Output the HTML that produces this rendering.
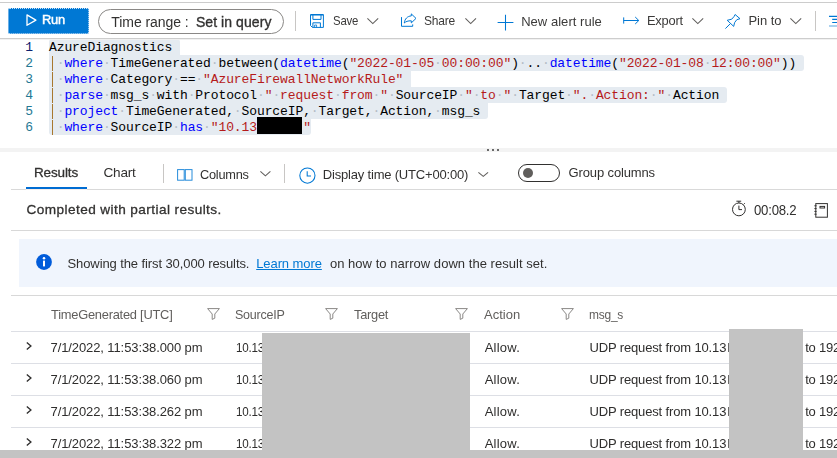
<!DOCTYPE html>
<html><head><meta charset="utf-8"><title>Logs</title>
<style>
html,body{margin:0;padding:0;}
body{width:837px;height:458px;position:relative;overflow:hidden;background:#fff;font-family:"Liberation Sans",sans-serif;}
.t{position:absolute;white-space:pre;line-height:20px;height:20px;transform-origin:0 50%;}
.a{position:absolute;}
.ln{position:absolute;left:0;width:33px;text-align:right;font-family:"Liberation Mono",monospace;font-size:13px;letter-spacing:-0.1px;line-height:18px;height:16px;color:#237893;}
.cl{position:absolute;left:49px;height:16px;line-height:18px;font-family:"Liberation Mono",monospace;font-size:13px;letter-spacing:-0.1px;white-space:pre;color:#000;background:#e5ebf1;}
.k{color:#0000ff;}.s{color:#b51a1a;}.d{color:#b4bcc6;}
.p{display:inline-block;width:7.7px;height:16px;vertical-align:top;position:relative;}
.p:before{content:"";position:absolute;left:3px;top:1px;width:1px;height:15px;background:#a8782e;}
svg{position:absolute;overflow:visible;}
</style></head><body>
<!-- top line -->
<div class="a" style="left:0;top:2px;width:837px;height:1px;background:#cccccc;"></div>
<!-- toolbar bottom border -->

<!-- Run button -->
<div class="a" style="left:7.5px;top:7.8px;width:81px;height:25.8px;background:#0078d4;border-radius:2px;box-sizing:border-box;border:1px dotted #cfe4f7;"></div>
<svg style="left:26px;top:14px" width="11" height="13" viewBox="0 0 11 13"><path d="M1 0.9 L9.9 6.1 L1 11.3 Z" fill="none" stroke="#fff" stroke-width="1.3" stroke-linejoin="round"/></svg>
<!-- time range pill -->
<div class="a" style="left:98px;top:9px;width:186px;height:25px;box-sizing:border-box;border:1px solid #8a8886;border-radius:12.5px;"></div>
<!-- separators -->
<div class="a" style="left:295px;top:11px;width:1px;height:20px;background:#c8c6c4;"></div>
<div class="a" style="left:815px;top:11px;width:1px;height:20px;background:#c8c6c4;"></div>
<!-- save icon -->
<svg style="left:310px;top:14px" width="14" height="14" viewBox="0 0 14 14" fill="none" stroke="#0078d4" stroke-width="1"><path d="M0.5 0.5 H13.4 V13.4 H2.4 L0.5 11.5 Z"/><path d="M0.5 1.4 H13.4" stroke-opacity="0.6"/><path d="M2.9 1 V5.4 H11 V1"/><path d="M2.9 13.4 V8.8 H10.4 V13.4"/><path d="M4.6 13.4 V11 H6.6 V13.4" stroke-opacity="0.8"/></svg>
<!-- chevrons -->
<svg style="left:367.4px;top:18.0px" width="11.6" height="6.2" viewBox="0 0 11.6 6.2" fill="none" stroke="#605e5c" stroke-width="1.05"><path d="M0.4 0.4 L5.80 5.60 L11.20 0.4"/></svg>
<svg style="left:465.0px;top:18.0px" width="11.4" height="6.2" viewBox="0 0 11.4 6.2" fill="none" stroke="#605e5c" stroke-width="1.05"><path d="M0.4 0.4 L5.70 5.60 L11.00 0.4"/></svg>
<svg style="left:691.8px;top:18.0px" width="11.6" height="6.2" viewBox="0 0 11.6 6.2" fill="none" stroke="#605e5c" stroke-width="1.05"><path d="M0.4 0.4 L5.80 5.60 L11.20 0.4"/></svg>
<svg style="left:790.3px;top:18.0px" width="11.6" height="6.2" viewBox="0 0 11.6 6.2" fill="none" stroke="#605e5c" stroke-width="1.05"><path d="M0.4 0.4 L5.80 5.60 L11.20 0.4"/></svg>
<svg style="left:259.6px;top:171.3px" width="10.8" height="5.5" viewBox="0 0 10.8 5.5" fill="none" stroke="#605e5c" stroke-width="1.05"><path d="M0.4 0.4 L5.40 4.90 L10.40 0.4"/></svg>
<svg style="left:477.6px;top:172.0px" width="10.5" height="5.0" viewBox="0 0 10.5 5.0" fill="none" stroke="#605e5c" stroke-width="1.05"><path d="M0.4 0.4 L5.25 4.40 L10.10 0.4"/></svg>
<!-- share icon -->
<svg style="left:400px;top:13px" width="17" height="15" viewBox="0 0 17 15" fill="none" stroke="#0078d4" stroke-width="1" stroke-linejoin="miter"><path d="M1.5 4.1 V13.3 H12.7 V11.4"/><path d="M11.3 0.9 L16 5.4 L11.3 9.9 V7.8 C8 7.7 5.6 8.6 4.3 10 C4.7 6 7.4 3.1 11.3 2.9 Z"/></svg>
<!-- plus icon -->
<svg style="left:497px;top:14px" width="17" height="17" viewBox="0 0 17 17" fill="none" stroke="#0078d4" stroke-width="1.05"><path d="M8.5 0.8 V16.6 M0.6 8.5 H16.4"/></svg>
<!-- export icon -->
<svg style="left:623px;top:15px" width="17" height="11" viewBox="0 0 17 11" fill="none" stroke="#0078d4" stroke-width="1"><path d="M0.7 2.4 V8.6 M0.7 5.5 H15.6 M12.2 2 L15.8 5.5 L12.2 9"/></svg>
<!-- pin icon -->
<svg style="left:725px;top:14px" width="16" height="16" viewBox="0 0 16 16" fill="none" stroke="#0078d4" stroke-width="1" stroke-linejoin="round"><path d="M10.1 0.5 L15 4.7 L11.8 5.7 L9.6 8.6 L8.7 12.4 L2.2 6.3 L6.7 5.2 L9 2.6 Z"/><path d="M5.3 9.7 L0.4 14.6"/></svg>
<!-- right edge icon -->
<svg style="left:829px;top:14px" width="8" height="14" viewBox="0 0 8 14" fill="none" stroke="#0078d4" stroke-width="1.2"><path d="M0 2.3 H8 M3.2 5.4 H8 M3.2 8.5 H8"/><path d="M0 12 H8" stroke-opacity="0.55"/></svg>

<!-- editor -->
<div class="ln" style="top:39px;color:#0b216f;">1</div>
<div class="ln" style="top:55px;">2</div>
<div class="ln" style="top:71px;">3</div>
<div class="ln" style="top:87px;">4</div>
<div class="ln" style="top:103px;">5</div>
<div class="ln" style="top:119px;">6</div>
<div class="cl" style="top:39px;border-radius:3px 3px 0 0;">AzureDiagnostics </div>
<div class="cl" style="top:55px;border-radius:0 3px 3px 0;"><span class="p"></span><span class="d">·</span><span class="k">where</span><span class="d">·</span>TimeGenerated<span class="d">·</span>between(<span class="k">datetime</span>(<span class="s">"2022-01-05<span class="d">·</span>00:00:00"</span>)<span class="d">·</span>..<span class="d">·</span><span class="k">datetime</span>(<span class="s">"2022-01-08<span class="d">·</span>12:00:00"</span>)) </div>
<div class="cl" style="top:71px;border-radius:0;"><span class="p"></span><span class="d">·</span><span class="k">where</span><span class="d">·</span>Category<span class="d">·</span>==<span class="d">·</span><span class="s">"AzureFirewallNetworkRule"</span> </div>
<div class="cl" style="top:87px;border-radius:0 3px 3px 0;"><span class="p"></span><span class="d">·</span><span class="k">parse</span><span class="d">·</span>msg_s<span class="d">·</span>with<span class="d">·</span>Protocol<span class="d">·</span><span class="s">"<span class="d">·</span>request<span class="d">·</span>from<span class="d">·</span>"</span><span class="d">·</span>SourceIP<span class="d">·</span><span class="s">"<span class="d">·</span>to<span class="d">·</span>"</span><span class="d">·</span>Target<span class="d">·</span><span class="s">".<span class="d">·</span>Action:<span class="d">·</span>"</span><span class="d">·</span>Action </div>
<div class="cl" style="top:103px;border-radius:0 0 3px 0;"><span class="p"></span><span class="d">·</span><span class="k">project</span><span class="d">·</span>TimeGenerated,<span class="d">·</span>SourceIP,<span class="d">·</span>Target,<span class="d">·</span>Action,<span class="d">·</span>msg_s </div>
<div class="cl" style="top:119px;border-radius:0 0 3px 3px;"><span class="p"></span><span class="d">·</span><span class="k">where</span><span class="d">·</span>SourceIP<span class="d">·</span><span class="k">has</span><span class="d">·</span><span class="s">"10.13      "</span></div>
<div class="a" style="left:0;top:38px;width:837px;height:1px;background:#cdcdcd;"></div><div class="a" style="left:0;top:39px;width:837px;height:1px;background:#f1f1f1;"></div>
<!-- redaction -->
<div class="a" style="left:257px;top:117px;width:45px;height:17px;background:#000;"></div>

<!-- splitter -->
<div class="a" style="left:0;top:148px;width:837px;height:4px;background:#f3f3f3;"></div>
<div class="a" style="left:487px;top:149px;width:2px;height:2px;background:#6a6a6a;"></div>
<div class="a" style="left:492px;top:149px;width:2px;height:2px;background:#6a6a6a;"></div>
<div class="a" style="left:497px;top:149px;width:2px;height:2px;background:#6a6a6a;"></div>

<!-- tabs -->
<div class="a" style="left:26px;top:187px;width:61px;height:2px;background:#006cd2;"></div>
<div class="a" style="left:11px;top:189px;width:826px;height:1px;background:#d9d9d9;"></div>
<div class="a" style="left:26px;top:189px;width:61px;height:1px;background:#f7efec;"></div>
<div class="a" style="left:163px;top:164px;width:1px;height:19px;background:#c8c6c4;"></div>
<div class="a" style="left:284px;top:164px;width:1px;height:19px;background:#c8c6c4;"></div>
<!-- columns icon -->
<svg style="left:177px;top:169.4px" width="16" height="12" viewBox="0 0 16 12" fill="none" stroke="#0078d4" stroke-opacity="0.85" stroke-width="1"><rect x="0.6" y="0.6" width="6.6" height="10.6"/><rect x="8.3" y="0.6" width="6.7" height="10.6"/></svg>
<!-- clock icon -->
<svg style="left:299px;top:167.4px" width="17" height="17" viewBox="0 0 17 17" fill="none" stroke="#0078d4" stroke-width="1.05"><circle cx="8.4" cy="8.6" r="7.6"/><path d="M8.2 4.2 V9 H12"/></svg>
<!-- toggle -->
<div class="a" style="left:518px;top:164px;width:42px;height:18px;box-sizing:border-box;border:1px solid #323130;border-radius:9px;"></div>
<div class="a" style="left:522.5px;top:168px;width:10px;height:10px;border-radius:5px;background:#605e5c;"></div>

<!-- status -->
<div class="a" style="left:11px;top:230px;width:826px;height:1px;background:#d8d8d8;"></div>
<!-- timer icon -->
<svg style="left:732px;top:200px" width="15" height="17" viewBox="0 0 15 17" fill="none" stroke="#323130" stroke-width="1"><circle cx="6.9" cy="9.4" r="6.4"/><path d="M4.4 1.2 H9.2 M6.9 1.2 V3 M6.9 5.6 V9.6 H10 M11.6 4.4 L12.8 3.2"/></svg>
<!-- notebook icon -->
<svg style="left:814px;top:203px" width="15" height="15" viewBox="0 0 15 15" fill="none" stroke="#323130" stroke-width="1"><rect x="1.8" y="0.6" width="11.6" height="13.6"/><rect x="6" y="3.4" width="4.6" height="1.6"/><path d="M0.4 2.8 H2.6 M0.4 5.6 H2.6 M0.4 8.4 H2.6 M0.4 11.2 H2.6"/></svg>

<!-- banner -->
<div class="a" style="left:19px;top:239px;width:818px;height:48px;background:#f0f5fd;"></div>
<svg style="left:36px;top:254px" width="16" height="16" viewBox="0 0 16 16"><circle cx="8" cy="8" r="7.9" fill="#015cda"/><rect x="7" y="6.6" width="2" height="5.8" fill="#fff"/><circle cx="8" cy="4.3" r="1.25" fill="#fff"/></svg>

<!-- table -->
<div class="a" style="left:11px;top:295px;width:826px;height:1px;background:#d8d8d8;"></div>
<div class="a" style="left:11px;top:331px;width:826px;height:1px;background:#dddfe5;"></div>
<div class="a" style="left:11px;top:363px;width:826px;height:1px;background:#dddfe5;"></div>
<div class="a" style="left:11px;top:395px;width:826px;height:1px;background:#dddfe5;"></div>
<div class="a" style="left:11px;top:427px;width:826px;height:1px;background:#dddfe5;"></div>
<svg style="left:207.4px;top:307.6px" width="13" height="12" viewBox="0 0 13 12" fill="none" stroke="#8a8886" stroke-width="1" stroke-linejoin="round"><path d="M0.6 0.6 H12.4 L7.8 6 V10.2 L5.2 11.4 V6 Z"/></svg>
<svg style="left:324.5px;top:307.6px" width="13" height="12" viewBox="0 0 13 12" fill="none" stroke="#8a8886" stroke-width="1" stroke-linejoin="round"><path d="M0.6 0.6 H12.4 L7.8 6 V10.2 L5.2 11.4 V6 Z"/></svg>
<svg style="left:454.6px;top:307.6px" width="13" height="12" viewBox="0 0 13 12" fill="none" stroke="#8a8886" stroke-width="1" stroke-linejoin="round"><path d="M0.6 0.6 H12.4 L7.8 6 V10.2 L5.2 11.4 V6 Z"/></svg>
<svg style="left:561.3px;top:307.6px" width="13" height="12" viewBox="0 0 13 12" fill="none" stroke="#8a8886" stroke-width="1" stroke-linejoin="round"><path d="M0.6 0.6 H12.4 L7.8 6 V10.2 L5.2 11.4 V6 Z"/></svg>
<svg style="left:25.7px;top:342.2px" width="6" height="8" viewBox="0 0 6 8" fill="none" stroke="#2f2e2d" stroke-width="1.35"><path d="M0.8 0.5 L4.9 4 L0.8 7.5"/></svg>
<svg style="left:25.7px;top:374.2px" width="6" height="8" viewBox="0 0 6 8" fill="none" stroke="#2f2e2d" stroke-width="1.35"><path d="M0.8 0.5 L4.9 4 L0.8 7.5"/></svg>
<svg style="left:25.7px;top:406.2px" width="6" height="8" viewBox="0 0 6 8" fill="none" stroke="#2f2e2d" stroke-width="1.35"><path d="M0.8 0.5 L4.9 4 L0.8 7.5"/></svg>
<svg style="left:25.7px;top:438.2px" width="6" height="8" viewBox="0 0 6 8" fill="none" stroke="#2f2e2d" stroke-width="1.35"><path d="M0.8 0.5 L4.9 4 L0.8 7.5"/></svg>
<div class="a" style="left:727.7px;top:343.4px;width:1.3px;height:9px;background:#6a6968;"></div>
<div class="a" style="left:727.7px;top:375.4px;width:1.3px;height:9px;background:#6a6968;"></div>
<div class="a" style="left:727.7px;top:407.4px;width:1.3px;height:9px;background:#6a6968;"></div>
<div class="a" style="left:727.7px;top:439.4px;width:1.3px;height:9px;background:#6a6968;"></div>
<div id="sans" style="position:absolute;left:0;top:0;width:837px;height:458px;will-change:transform;">
<span class="t" style="left:42.31px;top:9.90px;font-size:13px;font-weight:400;color:#ffffff;letter-spacing:-0.250px;transform:scaleX(0.9901);-webkit-text-stroke:0.45px #fff;">Run</span>
<span class="t" style="left:111.30px;top:12.15px;font-size:14px;font-weight:400;color:#323130;letter-spacing:-0.062px;">Time range :</span>
<span class="t" style="left:195.90px;top:12.15px;font-size:14px;font-weight:400;color:#323130;letter-spacing:0.072px;-webkit-text-stroke:0.34px #323130;">Set in query</span>
<span class="t" style="left:332.60px;top:10.60px;font-size:13px;font-weight:400;color:#3b3a39;letter-spacing:-0.250px;transform:scaleX(0.8761);">Save</span>
<span class="t" style="left:424.30px;top:10.60px;font-size:13px;font-weight:400;color:#3b3a39;letter-spacing:-0.250px;transform:scaleX(0.9235);">Share</span>
<span class="t" style="left:521.20px;top:11.60px;font-size:13px;font-weight:400;color:#3b3a39;letter-spacing:0.033px;">New alert rule</span>
<span class="t" style="left:646.61px;top:10.60px;font-size:13px;font-weight:400;color:#3b3a39;letter-spacing:-0.250px;transform:scaleX(0.9913);">Export</span>
<span class="t" style="left:748.50px;top:10.60px;font-size:13px;font-weight:400;color:#3b3a39;letter-spacing:-0.063px;">Pin to</span>
<span class="t" style="left:33.90px;top:163.42px;font-size:13.5px;font-weight:400;color:#323130;letter-spacing:-0.111px;-webkit-text-stroke:0.3px #323130;">Results</span>
<span class="t" style="left:103.50px;top:163.39px;font-size:13.6px;font-weight:400;color:#323130;letter-spacing:-0.241px;">Chart</span>
<span class="t" style="left:199.90px;top:164.90px;font-size:13px;font-weight:400;color:#323130;letter-spacing:-0.250px;transform:scaleX(0.9822);">Columns</span>
<span class="t" style="left:322.80px;top:164.90px;font-size:13px;font-weight:400;color:#323130;letter-spacing:-0.190px;">Display time (UTC+00:00)</span>
<span class="t" style="left:568.60px;top:162.50px;font-size:13px;font-weight:400;color:#323130;letter-spacing:-0.137px;">Group columns</span>
<span class="t" style="left:26.60px;top:200.09px;font-size:13.6px;font-weight:400;color:#323130;letter-spacing:0.420px;-webkit-text-stroke:0.3px #323130;">Completed with partial results.</span>
<span class="t" style="left:753.80px;top:199.95px;font-size:14px;font-weight:400;color:#323130;letter-spacing:-0.250px;transform:scaleX(0.9422);">00:08.2</span>
<span class="t" style="left:67.50px;top:253.60px;font-size:13px;font-weight:400;color:#323130;letter-spacing:-0.096px;">Showing the first 30,000 results.</span>
<span class="t" style="left:256.20px;top:253.60px;font-size:13px;font-weight:400;color:#0078d4;letter-spacing:-0.083px;text-decoration:underline;">Learn more</span>
<span class="t" style="left:329.90px;top:253.60px;font-size:13px;font-weight:400;color:#323130;letter-spacing:0.038px;">on how to narrow down the result set.</span>
<span class="t" style="left:51.20px;top:304.60px;font-size:13px;font-weight:400;color:#605e5c;letter-spacing:-0.250px;transform:scaleX(0.9904);">TimeGenerated [UTC]</span>
<span class="t" style="left:234.90px;top:304.60px;font-size:13px;font-weight:400;color:#605e5c;letter-spacing:-0.250px;transform:scaleX(0.9618);">SourceIP</span>
<span class="t" style="left:353.90px;top:304.60px;font-size:13px;font-weight:400;color:#605e5c;letter-spacing:-0.250px;transform:scaleX(0.9867);">Target</span>
<span class="t" style="left:484.10px;top:304.60px;font-size:13px;font-weight:400;color:#605e5c;letter-spacing:-0.020px;">Action</span>
<span class="t" style="left:588.70px;top:304.60px;font-size:13px;font-weight:400;color:#605e5c;letter-spacing:-0.250px;transform:scaleX(0.9209);">msg_s</span>
<span class="t" style="left:50.50px;top:338.00px;font-size:13px;font-weight:400;color:#2f2e2d;letter-spacing:-0.100px;">7/1/2022, 11:53:38.000 pm</span>
<span class="t" style="left:236.30px;top:338.00px;font-size:13px;font-weight:400;color:#2f2e2d;letter-spacing:-0.250px;transform:scaleX(0.8945);">10.13</span>
<span class="t" style="left:484.70px;top:338.00px;font-size:13px;font-weight:400;color:#2f2e2d;letter-spacing:0.230px;">Allow.</span>
<span class="t" style="left:589.50px;top:338.00px;font-size:13px;font-weight:400;color:#2f2e2d;letter-spacing:-0.145px;">UDP request from 10.13</span>
<span class="t" style="left:805.20px;top:338.00px;font-size:13px;font-weight:400;color:#2f2e2d;letter-spacing:-0.224px;">to 192.</span>
<span class="t" style="left:50.50px;top:370.00px;font-size:13px;font-weight:400;color:#2f2e2d;letter-spacing:-0.100px;">7/1/2022, 11:53:38.060 pm</span>
<span class="t" style="left:236.30px;top:370.00px;font-size:13px;font-weight:400;color:#2f2e2d;letter-spacing:-0.250px;transform:scaleX(0.8945);">10.13</span>
<span class="t" style="left:484.70px;top:370.00px;font-size:13px;font-weight:400;color:#2f2e2d;letter-spacing:0.230px;">Allow.</span>
<span class="t" style="left:589.50px;top:370.00px;font-size:13px;font-weight:400;color:#2f2e2d;letter-spacing:-0.145px;">UDP request from 10.13</span>
<span class="t" style="left:805.20px;top:370.00px;font-size:13px;font-weight:400;color:#2f2e2d;letter-spacing:-0.224px;">to 192.</span>
<span class="t" style="left:50.50px;top:402.00px;font-size:13px;font-weight:400;color:#2f2e2d;letter-spacing:-0.100px;">7/1/2022, 11:53:38.262 pm</span>
<span class="t" style="left:236.30px;top:402.00px;font-size:13px;font-weight:400;color:#2f2e2d;letter-spacing:-0.250px;transform:scaleX(0.8945);">10.13</span>
<span class="t" style="left:484.70px;top:402.00px;font-size:13px;font-weight:400;color:#2f2e2d;letter-spacing:0.230px;">Allow.</span>
<span class="t" style="left:589.50px;top:402.00px;font-size:13px;font-weight:400;color:#2f2e2d;letter-spacing:-0.145px;">UDP request from 10.13</span>
<span class="t" style="left:805.20px;top:402.00px;font-size:13px;font-weight:400;color:#2f2e2d;letter-spacing:-0.224px;">to 192.</span>
<span class="t" style="left:50.50px;top:434.00px;font-size:13px;font-weight:400;color:#2f2e2d;letter-spacing:-0.100px;">7/1/2022, 11:53:38.322 pm</span>
<span class="t" style="left:236.30px;top:434.00px;font-size:13px;font-weight:400;color:#2f2e2d;letter-spacing:-0.250px;transform:scaleX(0.8945);">10.13</span>
<span class="t" style="left:484.70px;top:434.00px;font-size:13px;font-weight:400;color:#2f2e2d;letter-spacing:0.230px;">Allow.</span>
<span class="t" style="left:589.50px;top:434.00px;font-size:13px;font-weight:400;color:#2f2e2d;letter-spacing:-0.145px;">UDP request from 10.13</span>
<span class="t" style="left:805.20px;top:434.00px;font-size:13px;font-weight:400;color:#2f2e2d;letter-spacing:-0.224px;">to 192.</span>
</div>
<!-- gray redactions -->
<div class="a" style="left:262px;top:333px;width:208px;height:125px;background:#c3c3c3;"></div>
<div class="a" style="left:729px;top:329px;width:74px;height:129px;background:#c3c3c3;"></div>
<div class="a" style="left:0;top:450px;width:837px;height:8px;background:#c3c3c3;"></div>
</body></html>
